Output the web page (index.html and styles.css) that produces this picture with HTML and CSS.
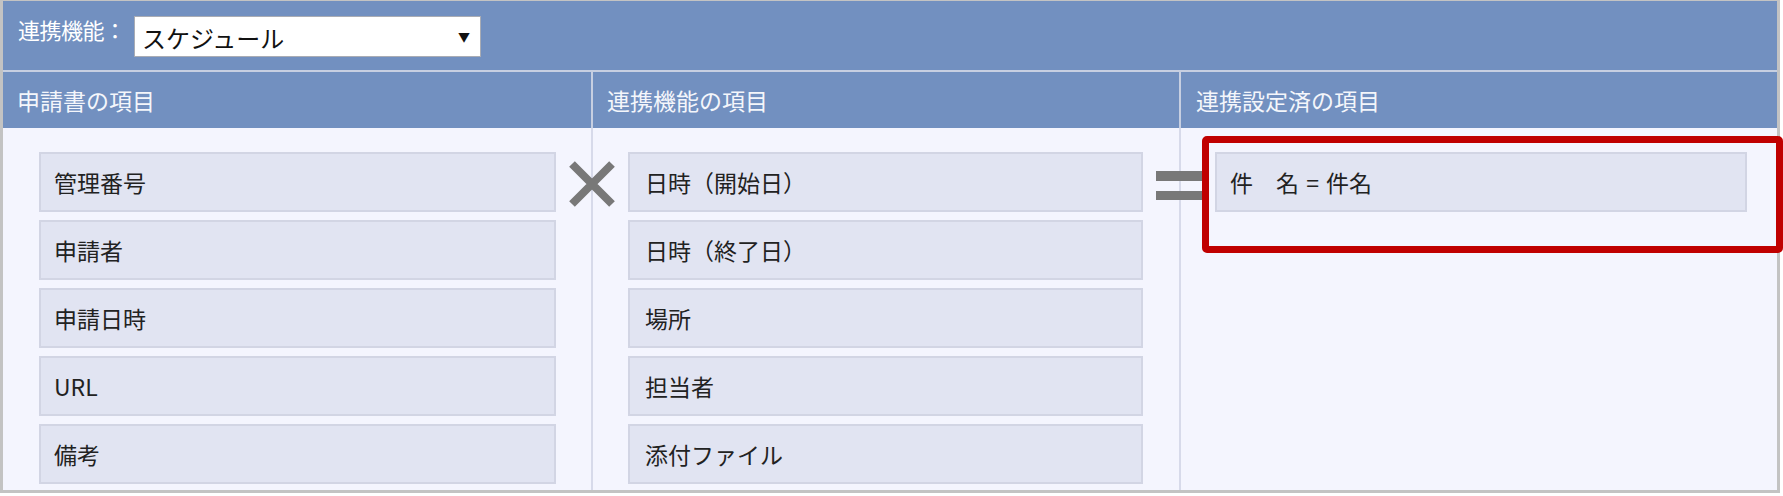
FILE: index.html
```html
<!DOCTYPE html>
<html lang="ja">
<head>
<meta charset="utf-8">
<title>連携設定</title>
<link rel="stylesheet" href="styles.css">
</head>
<body>
<div class="page">
  <div class="frame">
    <div class="topbar">
      <span class="label">連携機能：</span>
      <div class="select" role="combobox">
        <span class="select-text">スケジュール</span>
        <span class="select-arrow">▼</span>
      </div>
    </div>
    <div class="grid">
      <div class="head col1">申請書の項目</div>
      <div class="head col2">連携機能の項目</div>
      <div class="head col3">連携設定済の項目</div>

      <div class="cell col1">
        <div class="item">管理番号</div>
        <div class="item">申請者</div>
        <div class="item">申請日時</div>
        <div class="item">URL</div>
        <div class="item">備考</div>
      </div>
      <div class="cell col2">
        <svg class="times" width="48" height="48" viewBox="0 0 48 48"><path d="M4 4 L44 44 M44 4 L4 44" stroke="#787878" stroke-width="8" fill="none"/></svg>
        <div class="item">日時（開始日）</div>
        <div class="item">日時（終了日）</div>
        <div class="item">場所</div>
        <div class="item">担当者</div>
        <div class="item">添付ファイル</div>
      </div>
      <div class="cell col3">
        <svg class="equals" width="48" height="30" viewBox="0 0 48 30"><rect x="0" y="0" width="48" height="10" fill="#787878"/><rect x="0" y="20" width="48" height="9" fill="#787878"/></svg>
        <div class="item set">件　名 = 件名</div>
      </div>
    </div>
  </div>
  <div class="highlight"></div>
</div>
</body>
</html>
```
FILE: styles.css
```css
html, body {
  margin: 0;
  padding: 0;
  background: #ffffff;
}
body {
  font-family: "Noto Sans CJK JP", "Noto Sans", sans-serif;
  width: 1783px;
  height: 496px;
  overflow: hidden;
}
.page {
  position: relative;
  width: 1783px;
  height: 496px;
}
.frame {
  width: 1774px;
  border: 3px solid #c3c3c3;
  border-top-width: 1px;
  background: #f4f5fe;
}
.topbar {
  background: #7290c0;
  border-bottom: 2px solid #c7cfe1;
  display: flex;
  align-items: flex-start;
  padding-left: 15px;
  box-sizing: border-box;
  height: 71px;
}
.label {
  color: #ffffff;
  font-size: 22px;
  line-height: 24px;
  margin-top: 16px;
  width: 116px;
  white-space: nowrap;
  letter-spacing: -0.5px;
}
.select {
  margin-top: 15px;
  width: 347px;
  height: 41px;
  box-sizing: border-box;
  background: #ffffff;
  border: 1px solid #a9acb4;
  display: flex;
  align-items: center;
  justify-content: space-between;
  padding: 0 10px 0 7px;
}
.select-text {
  font-size: 24px;
  color: #111;
  line-height: 1;
  margin-top: 2px;
}
.select-arrow {
  font-size: 12px;
  color: #111;
  line-height: 1;
}
.grid {
  display: grid;
  grid-template-columns: 588px 588px 598px;
}
.head {
  height: 56px;
  background: #7290c0;
  color: #f4f6fb;
  font-size: 23px;
  display: flex;
  align-items: center;
  padding-left: 14px;
  box-sizing: border-box;
}
.head.col2, .head.col3 {
  border-left: 2px solid #c7cfe1;
}
.head.col1 { padding-left: 14px; }
.head.col2 { padding-left: 14px; }
.head.col3 { padding-left: 15px; }
.cell {
  position: relative;
  height: 362px;
  box-sizing: border-box;
  padding-top: 24px;
  display: flex;
  flex-direction: column;
  gap: 8px;
}
.cell.col1 { padding-left: 36px; padding-right: 35px; }
.cell.col2 { border-left: 2px solid #d7daea; padding-left: 35px; padding-right: 36px; }
.cell.col3 { border-left: 2px solid #d7daea; padding-left: 34px; padding-right: 30px; }
.item {
  height: 60px;
  box-sizing: border-box;
  background: #e1e4f2;
  border: 2px solid #d2d5e4;
  display: flex;
  align-items: center;
  padding-left: 13px;
  font-size: 23px;
  color: #222;
}
.col2 .item { padding-left: 15px; }
.col3 .item { padding-left: 13px; word-spacing: 2px; }
.times {
  position: absolute;
  left: -25px;
  top: 32px;
}
.equals {
  position: absolute;
  left: -25px;
  top: 43px;
}
.highlight {
  position: absolute;
  left: 1202px;
  top: 136px;
  width: 581px;
  height: 117px;
  box-sizing: border-box;
  border: 7px solid #c00000;
  border-radius: 5px;
}
```
